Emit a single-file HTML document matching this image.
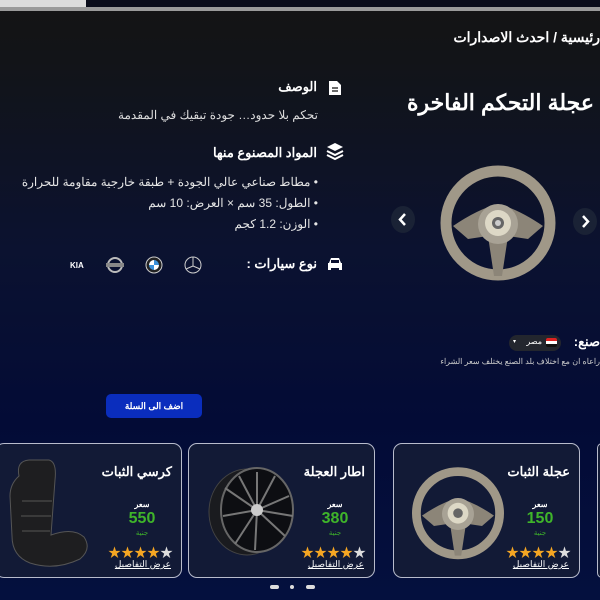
<!DOCTYPE html>
<html><head><meta charset="utf-8"><style>
*{margin:0;padding:0;box-sizing:border-box}
body{width:600px;height:600px;overflow:hidden;position:relative;font-family:"Liberation Sans","Noto Sans CJK SC",sans-serif;color:#fff;background:linear-gradient(180deg,#141414 0px,#121418 60px,#0b1230 250px,#030b36 420px,#04103e 600px)}
.t{position:absolute;direction:rtl;white-space:nowrap}
.card{position:absolute;top:443px;width:187px;height:135px;border:1.5px solid #b8bccc;border-radius:9px;background:#121a36}
.card .n{position:absolute;right:9px;top:20px;font-size:13px;font-weight:bold;direction:rtl}
.card .s{position:absolute;right:24px;top:56px;font-size:8px;font-weight:bold;text-align:center;width:30px}
.card .p{position:absolute;right:20px;top:66px;font-size:16px;font-weight:bold;color:#3fb52a;text-align:center;width:38px}
.card .j{position:absolute;right:24px;top:85px;font-size:7px;color:#3fb52a;text-align:center;width:30px}
.card .st{position:absolute;right:8px;top:98px;font-size:13px;color:#f5a623;letter-spacing:0px;direction:ltr}
.card .st b{color:#ddd;font-weight:normal}
.card .d{position:absolute;right:10px;top:115px;font-size:9px;text-decoration:underline;direction:rtl}
.btn{position:absolute;width:24px;height:27px;border-radius:50%;background:#1a2235}
</style></head><body>
<div style="position:absolute;left:0;top:0;width:86px;height:7px;background:#dcdcdc"></div>
<div style="position:absolute;left:86px;top:0;width:514px;height:7px;background:#0a0c1a"></div>
<div style="position:absolute;left:0;top:7px;width:600px;height:4px;background:#9a9a9a"></div>

<div class="t" style="right:0;top:29px;font-size:14px;font-weight:bold">رئيسية / احدث الاصدارات</div>
<div class="t" style="right:6px;top:90px;font-size:22px;font-weight:bold">عجلة التحكم الفاخرة</div>

<div class="t" style="right:283px;top:79px;font-size:13px;font-weight:bold">الوصف</div>
<svg style="position:absolute;left:328px;top:80px" width="14" height="16" viewBox="0 0 14 16"><path d="M1 1h8l4 4v10H1z" fill="#fff"/><path d="M4 8h6M4 11h6" stroke="#111" stroke-width="1.3"/></svg>
<div class="t" style="right:282px;top:108px;font-size:12px;color:#ddd">تحكم بلا حدود… جودة تبقيك في المقدمة</div>

<div class="t" style="right:283px;top:145px;font-size:13px;font-weight:bold">المواد المصنوع منها</div>
<svg style="position:absolute;left:326px;top:142px" width="18" height="20" viewBox="0 0 18 20"><path d="M9 1L17 5 9 9 1 5z" fill="#fff"/><path d="M1 9l8 4 8-4M1 13l8 4 8-4" stroke="#fff" stroke-width="2" fill="none"/></svg>
<div class="t" style="right:282px;top:175px;font-size:12px;color:#e6e6e6">• مطاط صناعي عالي الجودة + طبقة خارجية مقاومة للحرارة</div>
<div class="t" style="right:282px;top:196px;font-size:12px;color:#e6e6e6">• الطول: 35 سم × العرض: 10 سم</div>
<div class="t" style="right:282px;top:217px;font-size:12px;color:#e6e6e6">• الوزن: 1.2 كجم</div>

<div class="t" style="right:283px;top:256px;font-size:13px;font-weight:bold">نوع سيارات :</div>
<svg style="position:absolute;left:326px;top:256px" width="18" height="16" viewBox="0 0 18 16"><path d="M3 7l2-5h8l2 5h1v7h-3v-2H5v2H2V7z" fill="#fff"/><rect x="5" y="4" width="8" height="3" fill="#0a1030"/></svg>
<svg style="position:absolute;left:184px;top:256px" width="18" height="18" viewBox="0 0 18 18"><circle cx="9" cy="9" r="8" fill="none" stroke="#ccc" stroke-width="1"/><path d="M9 1v9L2 13M9 10l7 3" stroke="#ccc" stroke-width="1" fill="none"/></svg>
<svg style="position:absolute;left:145px;top:256px" width="18" height="18" viewBox="0 0 18 18"><circle cx="9" cy="9" r="8" fill="#222" stroke="#ccc"/><path d="M9 4a5 5 0 0 1 5 5H9zM9 14a5 5 0 0 1-5-5h5z" fill="#3a8fd8"/><path d="M14 9a5 5 0 0 1-5 5V9zM4 9a5 5 0 0 1 5-5v5z" fill="#fff"/></svg>
<svg style="position:absolute;left:106px;top:257px" width="18" height="16" viewBox="0 0 18 16"><circle cx="9" cy="8" r="7" fill="none" stroke="#bbb" stroke-width="2"/><rect x="0" y="6" width="18" height="4" fill="#888"/></svg>
<div class="t" style="left:70px;top:261px;font-size:8px;font-weight:bold;direction:ltr">KIA</div>

<div class="btn" style="left:391px;top:206px"><svg width="24" height="27" viewBox="0 0 24 27"><path d="M14 8l-5 5.5 5 5.5" stroke="#fff" stroke-width="2.5" fill="none"/></svg></div>
<div class="btn" style="left:573px;top:208px"><svg width="24" height="27" viewBox="0 0 24 27"><path d="M10 8l5 5.5-5 5.5" stroke="#fff" stroke-width="2.5" fill="none"/></svg></div>
<svg style="position:absolute;left:438px;top:164px" width="120" height="120" viewBox="0 0 120 120">
<circle cx="60" cy="59" r="52" fill="none" stroke="#a09888" stroke-width="11"/>
<path d="M15 62Q40 45 60 40Q80 45 105 62L90 75 70 72 64 112h-8L50 72 30 75z" fill="#8c8578"/>
<circle cx="60" cy="60" r="20" fill="#a8a295"/><circle cx="60" cy="59" r="13" fill="#ddd8c6"/><circle cx="60" cy="59" r="6" fill="#666"/><circle cx="60" cy="59" r="3" fill="#ccc"/>
</svg>

<div class="t" style="right:0;top:334px;font-size:13px;font-weight:bold">صنع:</div>
<div style="position:absolute;left:509px;top:335px;width:52px;height:16px;border-radius:8px;background:#23262e"></div>
<div style="position:absolute;left:546px;top:338px;width:11px;height:9px;border-radius:2px;background:linear-gradient(#d22 33%,#fff 33% 66%,#111 66%)"></div>
<div class="t" style="right:58px;top:337px;font-size:8px">مصر</div>
<div class="t" style="left:513px;top:338px;font-size:6px">▾</div>
<div class="t" style="right:0;top:357px;font-size:8px;color:#ccc">راعاه ان مع اختلاف بلد الصنع يختلف سعر الشراء</div>

<div style="position:absolute;left:106px;top:394px;width:96px;height:24px;border-radius:5px;background:#0a2dbd;font-size:9px;font-weight:bold;text-align:center;line-height:24px;direction:rtl">اضف الى السلة</div>

<div class="card" style="left:-5px">
<svg style="position:absolute;left:8px;top:12px" width="85" height="112" viewBox="0 0 85 112"><path d="M15 20Q12 5 25 4h20q8 2 6 20l-4 55q22-8 33 2 8 12-4 22-25 12-50 4Q8 100 8 80L6 40q0-12 9-20z" fill="#1e1e20" stroke="#555" stroke-width="1"/><path d="M18 45h30M17 60h30M18 75h28" stroke="#555"/></svg>
<div class="n">كرسي الثبات</div><div class="s">سعر</div><div class="p">550</div><div class="j">جنية</div>
<div class="st">★★★★<b>★</b></div><div class="d">عرض التفاصيل</div></div>

<div class="card" style="left:188px">
<svg style="position:absolute;left:16px;top:22px" width="95" height="90" viewBox="0 0 95 90"><ellipse cx="42" cy="46" rx="38" ry="43" fill="#1a1b1f" stroke="#444"/><ellipse cx="52" cy="44" rx="36" ry="42" fill="#0d0e12" stroke="#666" stroke-width="2"/><g stroke="#777" stroke-width="2"><path d="M52 44L52 6M52 44L84 30M52 44L80 70M52 44L30 78M52 44L20 22M52 44L70 10M52 44L88 50M52 44L50 84M52 44L18 50M52 44L34 10"/></g><circle cx="52" cy="44" r="6" fill="#ccc"/></svg>
<div class="n">اطار العجلة</div><div class="s">سعر</div><div class="p">380</div><div class="j">جنية</div>
<div class="st">★★★★<b>★</b></div><div class="d">عرض التفاصيل</div></div>

<div class="card" style="left:393px">
<svg style="position:absolute;left:16px;top:20px" width="96" height="100" viewBox="0 0 120 120"><circle cx="60" cy="59" r="52" fill="none" stroke="#a09888" stroke-width="11"/><path d="M15 62Q40 45 60 40Q80 45 105 62L90 75 70 72 64 112h-8L50 72 30 75z" fill="#8c8578"/><circle cx="60" cy="60" r="20" fill="#a8a295"/><circle cx="60" cy="59" r="13" fill="#ddd8c6"/><circle cx="60" cy="59" r="6" fill="#666"/></svg>
<div class="n">عجلة الثبات</div><div class="s">سعر</div><div class="p">150</div><div class="j">جنية</div>
<div class="st">★★★★<b>★</b></div><div class="d">عرض التفاصيل</div></div>
<div style="position:absolute;left:597px;top:443px;width:10px;height:135px;border:1.5px solid #b8bccc;border-radius:9px;background:#121a36"></div>

<div style="position:absolute;left:270px;top:585px;width:9px;height:4px;border-radius:2px;background:#ddd"></div>
<div style="position:absolute;left:290px;top:585px;width:4px;height:4px;border-radius:2px;background:#ddd"></div>
<div style="position:absolute;left:306px;top:585px;width:9px;height:4px;border-radius:2px;background:#ddd"></div>
</body></html>
